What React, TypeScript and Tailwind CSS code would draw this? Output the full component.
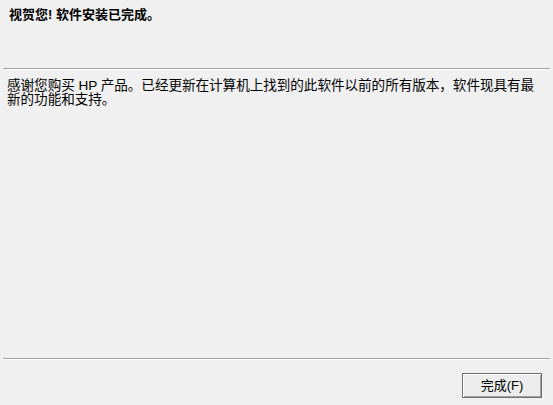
export default function App() {
  return (
    <div
      className="flex h-[405px] w-[553px] flex-col bg-[#f0f0f0] text-black"
      style={{ fontFamily: '"Liberation Sans", "Noto Sans CJK SC", sans-serif' }}
    >
      {/* Header */}
      <div className="h-[68px] px-[9px] pt-[6px]">
        <h1 className="text-[13px] font-bold leading-[18px]">视贺您! 软件安装已完成。</h1>
      </div>
      <div className="mx-[3px] h-px bg-[#a0a0a0]" />
      <div className="mx-[3px] h-px bg-white" />

      {/* Body */}
      <div className="flex-1 px-[7px] pt-[9px]">
        <p className="whitespace-nowrap text-[13.6px] leading-[14px] tracking-[-0.05px]">
          <span className="block">感谢您购买 HP 产品。已经更新在计算机上找到的此软件以前的所有版本，软件现具有最</span>
          <span className="block">新的功能和支持。</span>
        </p>
      </div>

      {/* Footer */}
      <div className="mx-[3px] h-px bg-[#a0a0a0]" />
      <div className="mx-[3px] h-px bg-white" />
      <div className="flex h-[45px] items-start justify-end pr-[11px] pt-[13px]">
        <button
          type="button"
          className="flex h-[25px] w-[80px] items-center justify-center border border-[#707070] bg-[#ececec] text-[13px] shadow-[inset_1px_1px_0_#ffffff,inset_-1px_-1px_0_#a0a0a0]"
        >
          完成(F)
        </button>
      </div>
    </div>
  );
}
